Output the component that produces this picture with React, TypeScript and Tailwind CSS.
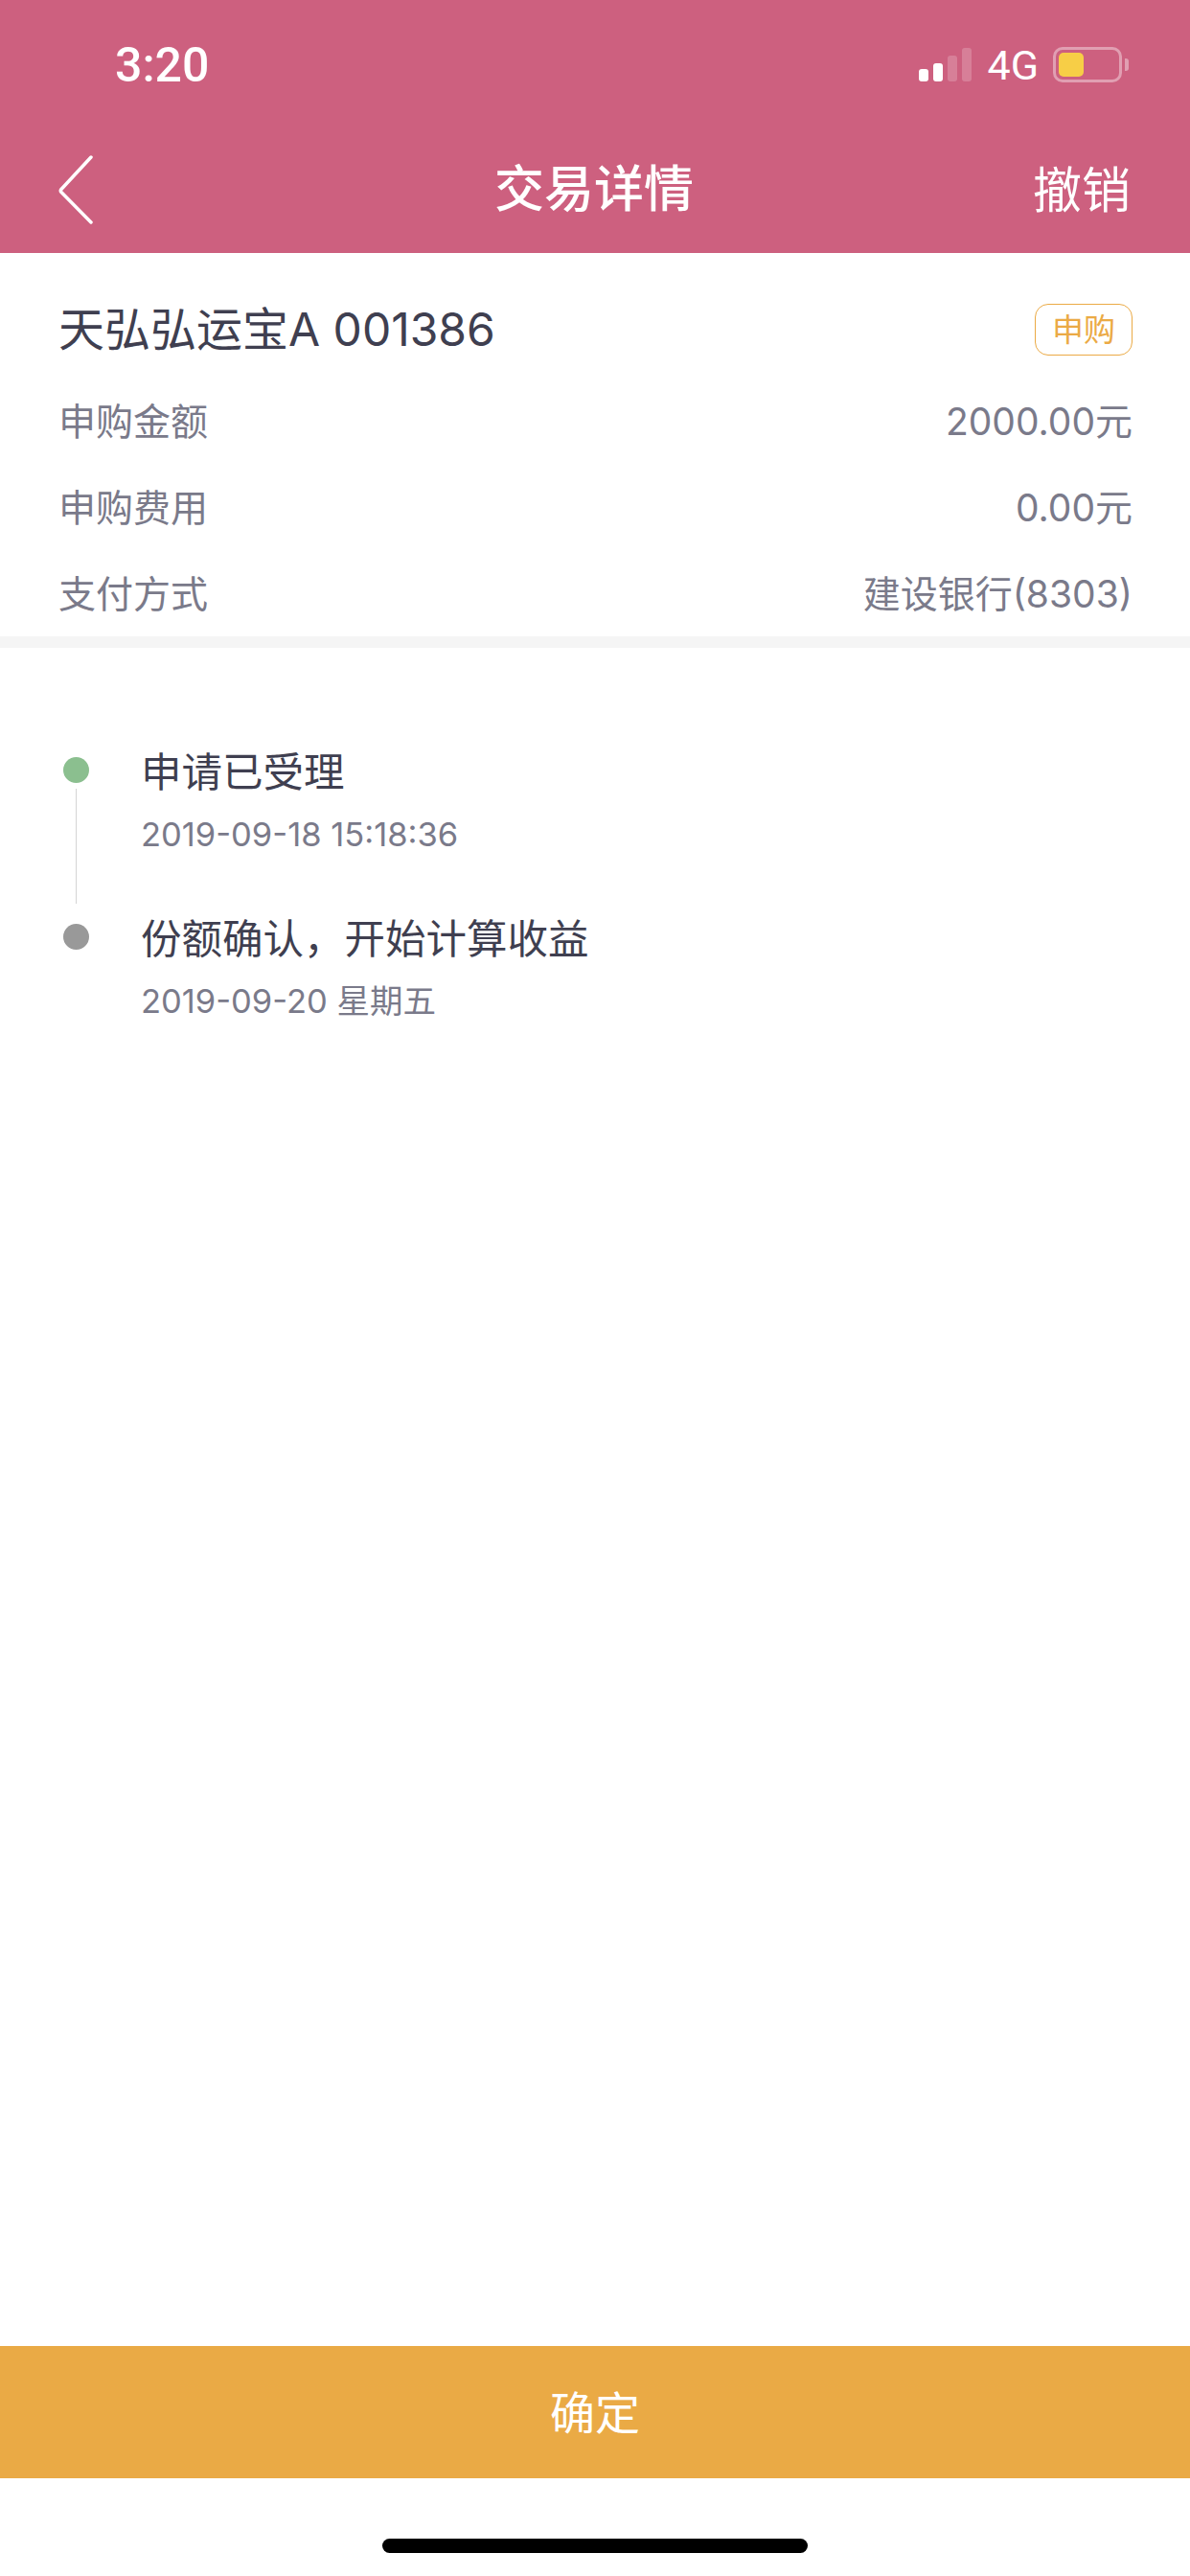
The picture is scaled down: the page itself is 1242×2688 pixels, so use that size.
import React from 'react';

const FONT = "font-['Inter','Noto_Sans_CJK_SC',sans-serif]";

const DetailRow: React.FC<{ label: string; value: string }> = ({ label, value }) => (
  <div className="flex h-[90px] items-center justify-between text-[39px] leading-none text-[#7a7a8a]">
    <span>{label}</span>
    <span>{value}</span>
  </div>
);

const StatusBar: React.FC = () => (
  <div className="flex h-[136px] items-start justify-between pl-[120px] pr-[64px] pt-[43px] text-white">
    <span className="font-['Roboto',sans-serif] text-[50px] font-medium leading-[50px]">3:20</span>
    <div className="flex items-start pt-[6px]">
      <div className="flex h-[36px] items-end gap-[5px]">
        <div className="h-[13px] w-[10px] rounded-[3px] bg-white" />
        <div className="h-[19px] w-[10px] rounded-[3px] bg-white" />
        <div className="h-[27px] w-[10px] rounded-[3px] bg-white/20" />
        <div className="h-[35px] w-[10px] rounded-[3px] bg-white/20" />
      </div>
      <span className="ml-[17px] pt-[1px] font-['Roboto',sans-serif] text-[43px] leading-[36px]">4G</span>
      <div className="ml-[15px] flex items-center">
        <div className="flex h-[37px] w-[72px] items-center rounded-[10px] border-[3px] border-white/40 pl-[3px]">
          <div className="h-[25px] w-[26px] rounded-[5px] bg-[#f7ce46]" />
        </div>
        <div className="ml-[3px] h-[13px] w-[4px] rounded-r-[3px] bg-white/40" />
      </div>
    </div>
  </div>
);

const NavBar: React.FC = () => (
  <div className="flex h-[128px] items-center justify-between pl-[60px] pr-[62px] pb-[4px] text-white">
    <div className="flex-1">
      <svg width="38" height="72" viewBox="0 0 38 72" fill="none" stroke="currentColor" strokeWidth="3.5" strokeLinecap="round" strokeLinejoin="round">
        <path d="M35 2 L3.5 36 Q3 37 3.5 38 L35 70" />
      </svg>
    </div>
    <span className="text-[52px] font-medium leading-none">交易详情</span>
    <span className="flex-1 text-right text-[51px] leading-none">撤销</span>
  </div>
);

const TimelineItem: React.FC<{ title: string; date: string; dot: string; last?: boolean }> = ({ title, date, dot, last }) => (
  <div className="flex h-[174px]">
    <div className="flex w-[87px] shrink-0 flex-col items-center pt-[12px]">
      <div className={`h-[27px] w-[27px] rounded-full ${dot}`} />
      {!last && <div className="mt-[6px] h-[120px] w-px bg-[#d4d4d4]" />}
    </div>
    <div className="ml-[24px] pt-[3px]">
      <div className="text-[42.5px] leading-[50px] text-[#3f3f50]">{title}</div>
      <div className="mt-[15px] text-[34.5px] leading-[50px] text-[#7a7a8a]">{date}</div>
    </div>
  </div>
);

export default function App() {
  return (
    <div className={`flex h-[2688px] w-[1242px] flex-col bg-white ${FONT}`}>
      <div className="bg-[#cd607f]">
        <StatusBar />
        <NavBar />
      </div>

      <div className="h-[412px] border-b-[12px] border-[#f5f5f5] pl-[61px] pr-[60px] pt-[53px]">
        <div className="flex h-[54px] items-center justify-between">
          <span className="text-[48px] leading-none text-[#3f3f50]">天弘弘运宝A 001386</span>
          <span className="flex h-[54px] w-[102px] items-center justify-center rounded-[14px] border-[1.5px] border-[#ebaa45] text-[33px] leading-none text-[#ebaa45]">申购</span>
        </div>
        <div className="mt-[23px]">
          <DetailRow label="申购金额" value="2000.00元" />
          <DetailRow label="申购费用" value="0.00元" />
          <DetailRow label="支付方式" value="建设银行(8303)" />
        </div>
      </div>

      <div className="flex-1 pl-[36px] pt-[102px]">
        <TimelineItem title="申请已受理" date="2019-09-18 15:18:36" dot="bg-[#8bbf8f]" />
        <TimelineItem title="份额确认，开始计算收益" date="2019-09-20 星期五" dot="bg-[#999999]" last />
      </div>

      <div className="flex h-[138px] items-center justify-center bg-[#eaaa45] text-[47px] leading-none text-white">确定</div>
      <div className="flex h-[102px] justify-center pt-[63px]">
        <div className="h-[15px] w-[444px] rounded-full bg-black" />
      </div>
    </div>
  );
}
